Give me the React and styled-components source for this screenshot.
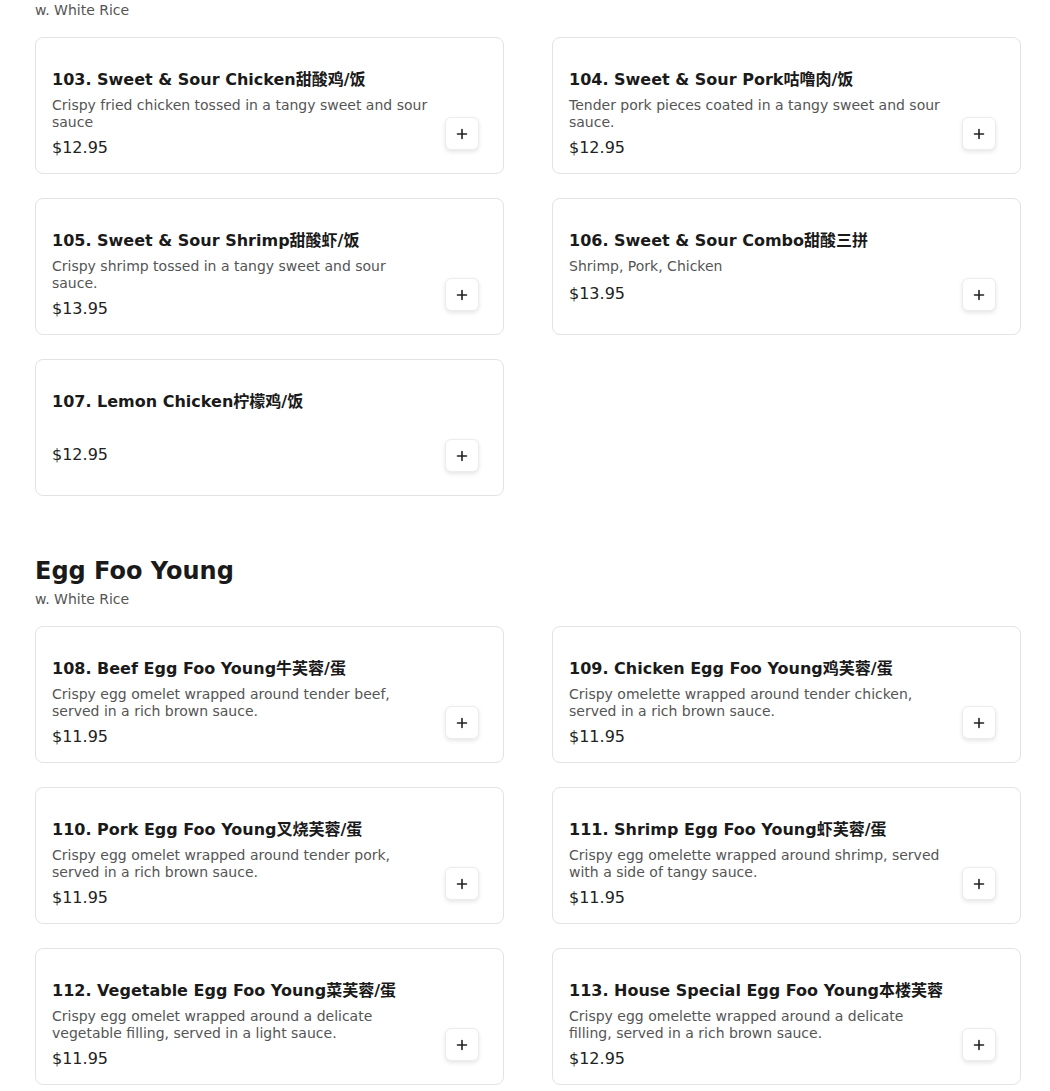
import React from "react";
import styled, {createGlobalStyle} from "styled-components";

const sections = [
    {
        id: "sweet-sour",
        title: null,
        subtitle: "w. White Rice",
        items: [
            {num: 103, name: "Sweet & Sour Chicken", cn: "甜酸鸡/饭", desc: "Crispy fried chicken tossed in a tangy sweet and sour sauce", price: "12.95"},
            {num: 104, name: "Sweet & Sour Pork", cn: "咕噜肉/饭", desc: "Tender pork pieces coated in a tangy sweet and sour sauce.", price: "12.95"},
            {num: 105, name: "Sweet & Sour Shrimp", cn: "甜酸虾/饭", desc: "Crispy shrimp tossed in a tangy sweet and sour sauce.", price: "13.95"},
            {num: 106, name: "Sweet & Sour Combo", cn: "甜酸三拼", desc: "Shrimp, Pork, Chicken", price: "13.95"},
            {num: 107, name: "Lemon Chicken", cn: "柠檬鸡/饭", desc: "", price: "12.95"},
        ]
    },
    {
        id: "egg-foo-young",
        title: "Egg Foo Young",
        subtitle: "w. White Rice",
        items: [
            {num: 108, name: "Beef Egg Foo Young", cn: "牛芙蓉/蛋", desc: "Crispy egg omelet wrapped around tender beef, served in a rich brown sauce.", price: "11.95"},
            {num: 109, name: "Chicken Egg Foo Young", cn: "鸡芙蓉/蛋", desc: "Crispy omelette wrapped around tender chicken, served in a rich brown sauce.", price: "11.95"},
            {num: 110, name: "Pork Egg Foo Young", cn: "叉烧芙蓉/蛋", desc: "Crispy egg omelet wrapped around tender pork, served in a rich brown sauce.", price: "11.95"},
            {num: 111, name: "Shrimp Egg Foo Young", cn: "虾芙蓉/蛋", desc: "Crispy egg omelette wrapped around shrimp, served with a side of tangy sauce.", price: "11.95"},
            {num: 112, name: "Vegetable Egg Foo Young", cn: "菜芙蓉/蛋", desc: "Crispy egg omelet wrapped around a delicate vegetable filling, served in a light sauce.", price: "11.95"},
            {num: 113, name: "House Special Egg Foo Young", cn: "本楼芙蓉", desc: "Crispy egg omelette wrapped around a delicate filling, served in a rich brown sauce.", price: "12.95"},
        ]
    }
]

const MenuCard = ({item}) => (
    <CardStyled>
        <CardTextStyled>
            <ItemTitleStyled>{item.num}. {item.name}{item.cn}</ItemTitleStyled>
            <ItemDescStyled>{item.desc}</ItemDescStyled>
            <ItemPriceStyled>${item.price}</ItemPriceStyled>
        </CardTextStyled>
        <AddButtonStyled type="button" aria-label={`Add ${item.name}`}>
            <svg width="12" height="12" viewBox="0 0 12 12">
                <path d="M6 1.5v9M1.5 6h9" stroke="#222" strokeWidth="1.6" strokeLinecap="round"/>
            </svg>
        </AddButtonStyled>
    </CardStyled>
)

const App = () => {
    return (
        <>
            <GlobalStyle/>
            <PageStyled>
                {sections.map(section => (
                    <SectionStyled key={section.id}>
                        {section.title && <SectionTitleStyled>{section.title}</SectionTitleStyled>}
                        <SectionSubtitleStyled>{section.subtitle}</SectionSubtitleStyled>
                        <GridStyled>
                            {section.items.map(item => <MenuCard key={item.num} item={item}/>)}
                        </GridStyled>
                    </SectionStyled>
                ))}
            </PageStyled>
        </>
    )
}

const GlobalStyle = createGlobalStyle`
    body {
        margin: 0;
        background: #fff;
        font-family: "DejaVu Sans", "Noto Sans CJK SC", sans-serif;
        color: #1a1a1a;
    }
`

const PageStyled = styled.main`
    width: 986px;
    padding: 2px 0 0 35px;
`

const SectionStyled = styled.section`
    margin-bottom: 59px;
`

const SectionTitleStyled = styled.h2`
    margin: 0 0 4px;
    font-size: 24px;
    line-height: 32px;
    font-weight: 700;
    color: #1a1a1a;
`

const SectionSubtitleStyled = styled.p`
    margin: 0 0 18px;
    font-size: 14px;
    line-height: 17px;
    color: #555;
`

const GridStyled = styled.div`
    display: grid;
    grid-template-columns: 1fr 1fr;
    column-gap: 48px;
    row-gap: 24px;
`

const CardStyled = styled.div`
    display: flex;
    align-items: flex-end;
    gap: 15px;
    min-height: 137px;
    box-sizing: border-box;
    padding: 31px 24px 12px 16px;
    border: 1px solid #e3e3e3;
    border-radius: 8px;
    background: #fff;
`

const CardTextStyled = styled.div`
    flex: 1;
    align-self: stretch;
    min-width: 0;
`

const ItemTitleStyled = styled.h3`
    margin: 0 0 6px;
    font-size: 16px;
    line-height: 22px;
    font-weight: 700;
    color: #1a1a1a;
`

const ItemDescStyled = styled.p`
    margin: 0 0 5px;
    min-height: 19px;
    font-size: 14px;
    line-height: 17px;
    color: #555;
`

const ItemPriceStyled = styled.div`
    font-size: 16px;
    line-height: 24px;
    color: #222;
`

const AddButtonStyled = styled.button`
    flex: none;
    display: flex;
    align-items: center;
    justify-content: center;
    width: 34px;
    height: 33px;
    margin-bottom: 11px;
    padding: 0;
    border: 1px solid #ececec;
    border-radius: 6px;
    background: #fff;
    box-shadow: 0 2px 4px rgba(0, 0, 0, 0.1);
    cursor: pointer;
`

export default App
